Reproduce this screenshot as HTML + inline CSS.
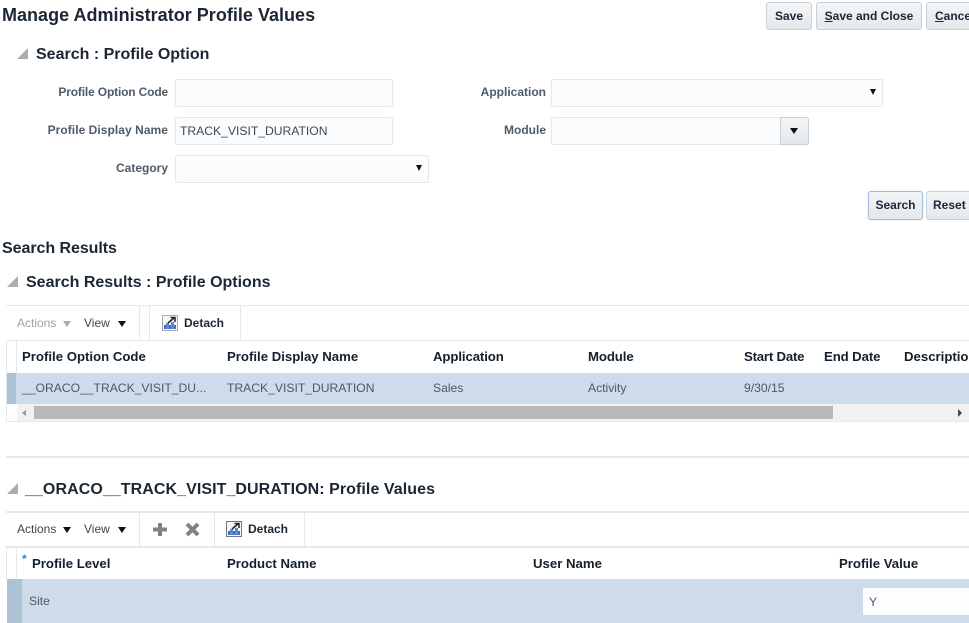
<!DOCTYPE html>
<html><head><meta charset="utf-8"><style>
html,body{margin:0;padding:0;background:#fff}
body{width:969px;height:623px;position:relative;overflow:hidden;font-family:"Liberation Sans",sans-serif;filter:blur(.3px)}
.t{position:absolute;white-space:nowrap;line-height:16px}
.h{font-weight:bold;color:#1c2733;font-size:16px}
.l{font-weight:bold;color:#4f5b66;font-size:12px;text-align:right}
.c{font-weight:bold;color:#14202c;font-size:13.2px}
.d{color:#4f5862;font-size:12.15px}
.b{position:absolute;box-sizing:border-box;background:linear-gradient(#f3f5f6,#e4e8eb);border:1px solid #c9d1d8;border-radius:3px;font-weight:bold;font-size:12px;color:#1c2733;text-align:center;line-height:26px;white-space:nowrap;overflow:hidden}
.i{position:absolute;box-sizing:border-box;background:#fbfcfe;border:1px solid #e4e8ec;border-radius:2px;height:28px}
.r{position:absolute;background:#e3e9ef}
.a{position:absolute;width:0;height:0;border-left:4px solid transparent;border-right:4px solid transparent;border-top:6px solid #111}
.s{position:absolute;width:0;height:0;border-style:solid;border-width:0 0 11px 11px;border-color:transparent transparent #a9aeb3 transparent}
u{text-decoration:underline}
</style></head><body>
<div class="t" style="left:2px;top:5px;font-size:18px;line-height:20px;font-weight:bold;color:#1c2733;letter-spacing:.02px">Manage Administrator Profile Values</div>
<div class="b" style="left:766px;top:2px;width:46px;height:28px">Save</div>
<div class="b" style="left:816px;top:2px;width:106px;height:28px"><u>S</u>ave and Close</div>
<div class="b" style="left:926px;top:2px;width:60px;height:28px;text-align:left;padding-left:8px"><u>C</u>ancel</div>

<div class="s" style="left:17px;top:48px"></div>
<div class="t h" style="left:36px;top:47px">Search : Profile Option</div>
<div class="t l" style="left:0;width:168px;top:84px;letter-spacing:-.16px">Profile Option Code</div>
<div class="i" style="left:175px;top:79px;width:218px"></div>
<div class="t l" style="left:0;width:168px;top:122px;letter-spacing:.05px">Profile Display Name</div>
<div class="i" style="left:175px;top:117px;width:218px"></div>
<div class="t d" style="left:180px;top:123px;color:#3f4953">TRACK_VISIT_DURATION</div>
<div class="t l" style="left:0;width:168px;top:160px">Category</div>
<div class="i" style="left:175px;top:155px;width:254px"></div>
<div class="a" style="left:416px;top:165px;border-left-width:3px;border-right-width:3px"></div>
<div class="t l" style="left:400px;width:146px;top:84px">Application</div>
<div class="i" style="left:551px;top:79px;width:332px"></div>
<div class="a" style="left:870px;top:89px;border-left-width:3px;border-right-width:3px"></div>
<div class="t l" style="left:400px;width:146px;top:122px">Module</div>
<div class="i" style="left:551px;top:117px;width:258px"></div>
<div class="b" style="left:780px;top:117px;width:29px;height:28px;border-radius:0 3px 3px 0"></div>
<div class="a" style="left:790px;top:128px"></div>
<div class="b" style="left:868px;top:191px;width:55px;height:29px;border:1px solid #9dbce0;box-shadow:0 0 1px #b9cfe8">Search</div>
<div class="b" style="left:926px;top:191px;width:60px;height:29px;text-align:left;padding-left:6px">Reset</div>

<div class="t h" style="left:2px;top:241px;letter-spacing:-.05px">Search Results</div>
<div class="s" style="left:7px;top:276px"></div>
<div class="t h" style="left:26px;top:275px">Search Results : Profile Options</div>

<div class="r" style="left:6px;top:305px;width:963px;height:1px"></div>
<div class="r" style="left:139px;top:305px;width:1px;height:35px"></div>
<div class="r" style="left:149px;top:305px;width:1px;height:35px"></div>
<div class="r" style="left:240px;top:305px;width:1px;height:35px"></div>
<div class="t" style="left:17px;top:315px;font-size:12px;color:#9aa1a8">Actions</div>
<div class="a" style="left:63px;top:321px;border-top-color:#a5abb1"></div>
<div class="t" style="left:84px;top:315px;font-size:12px;color:#3b4650">View</div>
<div class="a" style="left:118px;top:321px"></div>
<svg style="position:absolute;left:162px;top:315px" width="16" height="16" viewBox="0 0 16 16"><rect x=".5" y=".5" width="15" height="15" fill="#f5f6f7" stroke="#555" stroke-dasharray="1 1"/><rect x="2" y="10" width="12" height="4" fill="#3f6fc0"/><rect x="4" y="8" width="3" height="6" fill="#5b8bd8"/><rect x="9" y="7" width="3" height="7" fill="#5b8bd8"/><path d="M6 8L12 3M8.500 2.500H13V7" fill="none" stroke="#222" stroke-width="1.500"/></svg>
<div class="t" style="left:184px;top:315px;font-size:12px;font-weight:bold;color:#1c2733">Detach</div>

<div class="r" style="left:6px;top:340px;width:963px;height:1px"></div>
<div class="r" style="left:6px;top:341px;width:1px;height:81px"></div>
<div class="r" style="left:16px;top:341px;width:1px;height:32px"></div>
<div class="t c" style="left:22px;top:349px">Profile Option Code</div>
<div class="t c" style="left:227px;top:349px">Profile Display Name</div>
<div class="t c" style="left:433px;top:349px;letter-spacing:-.1px">Application</div>
<div class="t c" style="left:588px;top:349px;letter-spacing:-.1px">Module</div>
<div class="t c" style="left:744px;top:349px;letter-spacing:-.2px">Start Date</div>
<div class="t c" style="left:824px;top:349px;letter-spacing:-.1px">End Date</div>
<div class="t c" style="left:904px;top:349px">Description</div>
<div style="position:absolute;left:7px;top:373px;width:962px;height:31px;background:#cddbea"></div>
<div style="position:absolute;left:7px;top:373px;width:9px;height:31px;background:#adc3d5"></div>
<div class="t d" style="left:22px;top:380px">__ORACO__TRACK_VISIT_DU...</div>
<div class="t d" style="left:227px;top:380px">TRACK_VISIT_DURATION</div>
<div class="t d" style="left:433px;top:380px">Sales</div>
<div class="t d" style="left:588px;top:380px">Activity</div>
<div class="t d" style="left:744px;top:380px">9/30/15</div>
<div style="position:absolute;left:17px;top:404px;width:952px;height:17px;background:#f1f1f1"></div>
<div style="position:absolute;left:34px;top:406px;width:799px;height:13px;background:#b8b8b8"></div>
<div style="position:absolute;left:22px;top:410px;border-style:solid;border-width:3px 4px 3px 0;border-color:transparent #999 transparent transparent"></div>
<div style="position:absolute;left:958px;top:409px;border-style:solid;border-width:4px 0 4px 4px;border-color:transparent transparent transparent #444"></div>
<div class="r" style="left:6px;top:421px;width:963px;height:1px"></div>

<div class="r" style="left:6px;top:456px;width:963px;height:2px"></div>
<div class="s" style="left:7px;top:483px"></div>
<div class="t h" style="left:25px;top:482px;letter-spacing:.07px">__ORACO__TRACK_VISIT_DURATION: Profile Values</div>

<div class="r" style="left:6px;top:511px;width:963px;height:2px"></div>
<div class="r" style="left:139px;top:512px;width:1px;height:35px"></div>
<div class="r" style="left:214px;top:512px;width:1px;height:35px"></div>
<div class="r" style="left:304px;top:512px;width:1px;height:35px"></div>
<div class="t" style="left:17px;top:521px;font-size:12px;color:#3b4650">Actions</div>
<div class="a" style="left:63px;top:527px"></div>
<div class="t" style="left:84px;top:521px;font-size:12px;color:#3b4650">View</div>
<div class="a" style="left:118px;top:527px"></div>
<svg style="position:absolute;left:152px;top:522px" width="16" height="15" viewBox="0 0 16 15"><path d="M8 1V14M1 7.500H15" stroke="#7d8489" stroke-width="4"/></svg>
<svg style="position:absolute;left:185px;top:522px" width="15" height="15" viewBox="0 0 15 15"><path d="M2 2L13 13M13 2L2 13" stroke="#7d8489" stroke-width="4"/></svg>
<svg style="position:absolute;left:226px;top:521px" width="16" height="16" viewBox="0 0 16 16"><rect x=".5" y=".5" width="15" height="15" fill="#f5f6f7" stroke="#777"/><rect x="2" y="10" width="12" height="4" fill="#3f6fc0"/><rect x="4" y="8" width="3" height="6" fill="#5b8bd8"/><rect x="9" y="7" width="3" height="7" fill="#5b8bd8"/><path d="M6 8L12 3M8.500 2.500H13V7" fill="none" stroke="#222" stroke-width="1.500"/></svg>
<div class="t" style="left:248px;top:521px;font-size:12px;font-weight:bold;color:#1c2733">Detach</div>

<div class="r" style="left:6px;top:546px;width:963px;height:2px"></div>
<div class="r" style="left:6px;top:548px;width:1px;height:31px"></div>
<div class="r" style="left:16px;top:548px;width:1px;height:31px"></div>
<div class="t" style="left:22px;top:553px;font-size:12px;line-height:12px;color:#3d7fc4;font-weight:bold">*</div>
<div class="t c" style="left:32px;top:556px">Profile Level</div>
<div class="t c" style="left:227px;top:556px">Product Name</div>
<div class="t c" style="left:533px;top:556px">User Name</div>
<div class="t c" style="left:839px;top:556px">Profile Value</div>
<div style="position:absolute;left:7px;top:579px;width:962px;height:44px;background:#cddbea"></div>
<div style="position:absolute;left:7px;top:579px;width:15px;height:44px;background:#adc3d5"></div>
<div class="t d" style="left:29px;top:593px">Site</div>
<div style="position:absolute;left:863px;top:588px;width:106px;height:27px;background:#fcfdfe"></div>
<div class="t d" style="left:869px;top:594px">Y</div>
</body></html>
